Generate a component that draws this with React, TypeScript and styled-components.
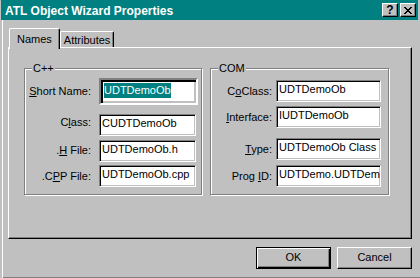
import React from 'react';
import styled, { createGlobalStyle, css } from 'styled-components';

const GlobalStyle = createGlobalStyle`
  html, body {
    margin: 0;
    padding: 0;
    background: #c0c0c0;
    overflow: hidden;
  }
  body {
    font-family: "Liberation Sans", Arial, sans-serif;
    font-size: 11px;
    color: #000;
  }
`;

const Window = styled.div`
  width: 420px;
  height: 278px;
  box-sizing: border-box;
  background: #c0c0c0;
  box-shadow: inset 2px 0 #c0c0c0, inset 3px 0 #fff, inset 0 -1px #808080;
  display: flex;
  flex-direction: column;
`;

const TitleBar = styled.div`
  height: 20px;
  margin: 0 2px 0 1px;
  padding: 0 2px 0 4px;
  background: #008080;
  display: flex;
  align-items: center;
`;

const TitleText = styled.span`
  flex: 1;
  color: #fff;
  font-weight: bold;
  font-size: 12px;
  line-height: 14px;
  padding-top: 1px;
  white-space: nowrap;
`;

const CaptionButton = styled.div`
  box-sizing: border-box;
  width: 16px;
  height: 14px;
  margin-left: 2px;
  background: #c0c0c0;
  border: 1px solid;
  border-color: #fff #000 #000 #fff;
  box-shadow: inset -1px -1px #808080;
  display: flex;
  align-items: center;
  justify-content: center;
  font-weight: bold;
  font-size: 12px;
  line-height: 11px;
`;

const Body = styled.div`
  flex: 1;
  padding: 8px 8px 0 8px;
  display: flex;
  flex-direction: column;
`;

const TabStrip = styled.div`
  position: relative;
  z-index: 1;
  height: 19px;
  padding-left: 1px;
  display: flex;
  align-items: flex-end;
`;

const Tab = styled.div<{ $active?: boolean }>`
  box-sizing: border-box;
  height: ${p => (p.$active ? 21 : 16)}px;
  margin-bottom: ${p => (p.$active ? -2 : 0)}px;
  padding: ${p => (p.$active ? '0 7px' : '1px 3px 0')};
  background: #c0c0c0;
  border: 1px solid;
  border-bottom: none;
  border-color: #fff #000 #000 #fff;
  border-radius: 2px 2px 0 0;
  box-shadow: inset -1px 0 #808080;
  display: flex;
  align-items: center;
  line-height: 13px;
  white-space: nowrap;
`;

const Panel = styled.div`
  box-sizing: border-box;
  height: 192px;
  border: 1px solid;
  border-color: #fff #000 #000 #fff;
  box-shadow: inset -1px -1px #808080;
  padding: 20px 0 0 15px;
  display: flex;
  align-items: flex-start;
  gap: 8px;
`;

const Group = styled.div<{ $width: number; $top: number }>`
  position: relative;
  box-sizing: border-box;
  width: ${p => p.$width}px;
  height: 127px;
  border: 1px solid #808080;
  box-shadow: inset 1px 1px #fff, 1px 1px #fff;
  padding: ${p => p.$top}px 0 0 4px;
  display: flex;
  flex-direction: column;
`;

const GroupCaption = styled.span`
  position: absolute;
  top: -7px;
  left: 7px;
  padding: 0 1px;
  background: #c0c0c0;
  line-height: 13px;
`;

const Row = styled.div<{ $gap?: number; $gutter: number }>`
  display: flex;
  align-items: center;
  gap: ${p => p.$gutter}px;
  margin-top: ${p => p.$gap ?? 0}px;
`;

const Label = styled.span<{ $width: number; $raise?: number }>`
  width: ${p => p.$width}px;
  text-align: right;
  white-space: nowrap;
  line-height: 13px;
  padding-bottom: ${p => p.$raise ?? 0}px;
  u {
    text-decoration: underline;
    text-underline-offset: 1px;
  }
`;

const Edit = styled.div<{ $width: number; $focused?: boolean }>`
  box-sizing: border-box;
  width: ${p => p.$width}px;
  background: #fff;
  line-height: 13px;
  white-space: nowrap;
  overflow: hidden;
  ${p =>
    p.$focused
      ? css`
          height: 27px;
          border: 2px solid;
          border-color: #808080 #fff #fff #808080;
          box-shadow: inset 2px 2px #000, inset -2px -2px #c0c0c0;
          padding: 3px 0 0 3px;
        `
      : css`
          height: 22px;
          border: 1px solid;
          border-color: #808080 #fff #fff #808080;
          box-shadow: inset 1px 1px #000, inset -1px -1px #c0c0c0;
          padding: 2px 0 0 2px;
        `}
`;

const Selected = styled.span`
  display: inline-block;
  background: #008080;
  color: #fff;
  line-height: 15px;
`;

const ButtonRow = styled.div`
  margin-top: 8px;
  display: flex;
  justify-content: flex-end;
  gap: 6px;
`;

const PushButton = styled.div<{ $default?: boolean }>`
  box-sizing: border-box;
  width: 75px;
  height: 22px;
  padding-bottom: 2px;
  background: #c0c0c0;
  border: 1px solid;
  display: flex;
  align-items: center;
  justify-content: center;
  line-height: 13px;
  ${p =>
    p.$default
      ? css`
          border-color: #000;
          box-shadow: inset 1px 1px #fff, inset -1px -1px #000, inset -2px -2px #808080;
        `
      : css`
          border-color: #fff #000 #000 #fff;
          box-shadow: inset -1px -1px #808080;
        `}
`;

const CloseGlyph = () => (
  <svg width="8" height="7" viewBox="0 0 8 7" shapeRendering="crispEdges">
    <path
      fill="#000"
      d="M0 0h2v1H0zM6 0h2v1H6zM1 1h2v1H1zM5 1h2v1H5zM2 2h4v1H2zM3 3h2v1H3zM2 4h4v1H2zM1 5h2v1H1zM5 5h2v1H5zM0 6h2v1H0zM6 6h2v1H6z"
    />
  </svg>
);

export default function App() {
  return (
    <>
      <GlobalStyle />
      <Window>
        <TitleBar>
          <TitleText>ATL Object Wizard Properties</TitleText>
          <CaptionButton>?</CaptionButton>
          <CaptionButton>
            <CloseGlyph />
          </CaptionButton>
        </TitleBar>
        <Body>
          <TabStrip>
            <Tab $active>Names</Tab>
            <Tab>Attributes</Tab>
          </TabStrip>
          <Panel>
            <Group $width={178} $top={9}>
              <GroupCaption>C++</GroupCaption>
              <Row $gutter={8}>
                <Label $width={62}>
                  <u>S</u>hort Name:
                </Label>
                <Edit $width={99} $focused>
                  <Selected>UDTDemoOb</Selected>
                </Edit>
              </Row>
              <Row $gutter={8} $gap={9}>
                <Label $width={62} $raise={6}>
                  C<u>l</u>ass:
                </Label>
                <Edit $width={97}>CUDTDemoOb</Edit>
              </Row>
              <Row $gutter={8} $gap={4}>
                <Label $width={62} $raise={2}>
                  .<u>H</u> File:
                </Label>
                <Edit $width={97}>UDTDemoOb.h</Edit>
              </Row>
              <Row $gutter={8} $gap={3}>
                <Label $width={62}>
                  .C<u>P</u>P File:
                </Label>
                <Edit $width={97}>UDTDemoOb.cpp</Edit>
              </Row>
            </Group>
            <Group $width={179} $top={11}>
              <GroupCaption>COM</GroupCaption>
              <Row $gutter={4}>
                <Label $width={57}>
                  C<u>o</u>Class:
                </Label>
                <Edit $width={105}>UDTDemoOb</Edit>
              </Row>
              <Row $gutter={4} $gap={4}>
                <Label $width={57}>
                  <u>I</u>nterface:
                </Label>
                <Edit $width={105}>IUDTDemoOb</Edit>
              </Row>
              <Row $gutter={4} $gap={10}>
                <Label $width={57}>
                  <u>T</u>ype:
                </Label>
                <Edit $width={105}>UDTDemoOb Class</Edit>
              </Row>
              <Row $gutter={4} $gap={5}>
                <Label $width={57}>
                  Prog <u>I</u>D:
                </Label>
                <Edit $width={105}>UDTDemo.UDTDemoOb</Edit>
              </Row>
            </Group>
          </Panel>
          <ButtonRow>
            <PushButton $default>OK</PushButton>
            <PushButton>Cancel</PushButton>
          </ButtonRow>
        </Body>
      </Window>
    </>
  );
}
